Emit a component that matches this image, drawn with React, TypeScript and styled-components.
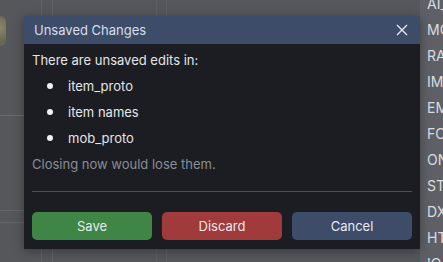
import React from "react";
import styled, { createGlobalStyle } from "styled-components";

const GlobalStyle = createGlobalStyle`
  html, body {
    margin: 0;
    padding: 0;
    background: #55575b;
    font-family: Inter, "Noto Sans", sans-serif;
  }
  * {
    box-sizing: border-box;
  }
`;

const Page = styled.div`
  width: 443px;
  height: 262px;
  display: flex;
  overflow: hidden;
  position: relative;
`;

const Canvas = styled.div`
  flex: 1;
  position: relative;
  background-color: #55575b;
  background-image:
    linear-gradient(#6a6c70, #6a6c70),
    linear-gradient(#64666a, #64666a),
    linear-gradient(#64666a, #64666a),
    linear-gradient(#616367, #616367),
    linear-gradient(#616367, #616367),
    linear-gradient(#5d5f63, #5d5f63),
    linear-gradient(#5d5f63, #5d5f63);
  background-size: 24px 1px, 24px 1px, 24px 1px, 1px 262px, 1px 262px, 1px 262px, 1px 262px;
  background-position: 0 115px, 0 210px, 0 222px, 41px 0, 52px 0, 156px 0, 166px 0;
  background-repeat: no-repeat;
`;

const Trophy = styled.div`
  position: absolute;
  left: -4px;
  top: 16px;
  width: 10px;
  height: 30px;
  border-radius: 0 6px 6px 0;
  background: radial-gradient(circle at 30% 40%, #9c9775, #6f6b4d 70%);
  opacity: 0.8;
`;

const SideList = styled.div`
  width: 23px;
  flex-shrink: 0;
  background: #5e6065;
  display: flex;
  flex-direction: column;
  padding-left: 7px;
  margin-top: -9px;
  overflow: hidden;
`;

const SideItem = styled.div`
  height: 26px;
  line-height: 26px;
  font-size: 14px;
  color: #dcdde0;
  white-space: nowrap;
`;

const Dialog = styled.div`
  position: absolute;
  left: 24px;
  top: 16px;
  width: 396px;
  height: 233px;
  background: #1c1d22;
  display: flex;
  flex-direction: column;
  box-shadow: 0 2px 10px rgba(0, 0, 0, 0.35);
`;

const TitleBar = styled.div`
  height: 28px;
  background: #3c4c69;
  display: flex;
  align-items: center;
  justify-content: space-between;
  padding: 0 12px 0 10px;
`;

const Title = styled.span`
  font-size: 13px;
  color: #d9dee8;
`;

const CloseButton = styled.button`
  border: none;
  background: none;
  padding: 0;
  width: 12px;
  height: 12px;
  display: flex;
  cursor: pointer;
`;

const Body = styled.div`
  flex: 1;
  padding: 3px 8px 8px;
  display: flex;
  flex-direction: column;
`;

const Line = styled.div<{ $muted?: boolean }>`
  height: 26px;
  line-height: 26px;
  font-size: 13px;
  color: ${(p) => (p.$muted ? "#8a8d94" : "#e4e5e8")};
`;

const List = styled.ul`
  list-style: none;
  margin: 0;
  padding: 0;
`;

const Item = styled.li`
  height: 26px;
  line-height: 26px;
  font-size: 13px;
  color: #e4e5e8;
  padding-left: 36px;
  position: relative;

  &::before {
    content: "";
    position: absolute;
    left: 15px;
    top: 10px;
    width: 6px;
    height: 6px;
    border-radius: 50%;
    background: #f2f2f4;
  }
`;

const Divider = styled.div`
  height: 1px;
  background: #4e5056;
  margin-top: 14px;
`;

const Buttons = styled.div`
  display: grid;
  grid-template-columns: repeat(3, 1fr);
  gap: 10px;
  margin-top: 20px;
`;

const Button = styled.button<{ $tone: "save" | "discard" | "cancel" }>`
  height: 28px;
  border: none;
  border-radius: 5px;
  font-family: inherit;
  font-size: 13px;
  color: #e8eaee;
  cursor: pointer;
  background: ${(p) =>
    p.$tone === "save" ? "#3f8646" : p.$tone === "discard" ? "#a13a3a" : "#3c4c69"};
`;

const sideLabels = ["AI_", "MO", "RA", "IM", "EM", "FO", "ON", "ST", "DX", "HT", "IO"];

export default function App() {
  return (
    <>
      <GlobalStyle />
      <Page>
        <Canvas>
          <Trophy />
        </Canvas>
        <SideList>
          {sideLabels.map((l) => (
            <SideItem key={l}>{l}</SideItem>
          ))}
        </SideList>
        <Dialog>
          <TitleBar>
            <Title>Unsaved Changes</Title>
            <CloseButton aria-label="Close">
              <svg width="12" height="12" viewBox="0 0 12 12">
                <path d="M1 1L11 11M11 1L1 11" stroke="#e6e9ef" strokeWidth="1.4" />
              </svg>
            </CloseButton>
          </TitleBar>
          <Body>
            <Line>There are unsaved edits in:</Line>
            <List>
              <Item>item_proto</Item>
              <Item>item names</Item>
              <Item>mob_proto</Item>
            </List>
            <Line $muted>Closing now would lose them.</Line>
            <Divider />
            <Buttons>
              <Button $tone="save">Save</Button>
              <Button $tone="discard">Discard</Button>
              <Button $tone="cancel">Cancel</Button>
            </Buttons>
          </Body>
        </Dialog>
      </Page>
    </>
  );
}
